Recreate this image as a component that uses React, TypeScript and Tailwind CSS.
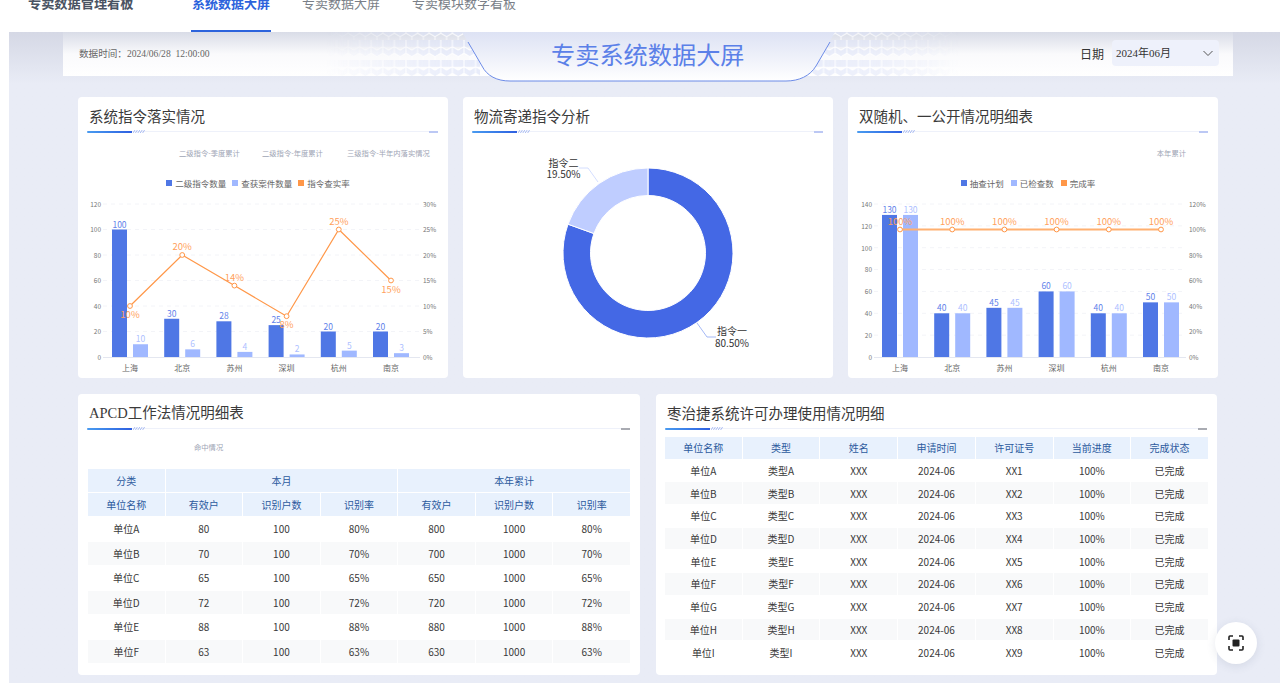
import type { ReactNode } from 'react';

const CJK = "'Noto Sans CJK SC', sans-serif";

function CardHeader({ title, serif, dash }: { title: string; serif?: boolean; dash?: boolean }) {
  return (
    <div className="relative h-[36px] shrink-0">
      <div className={`pl-[11px] pt-[9px] text-[14.5px] leading-[20px] text-[#3a3a3a] ${serif ? "font-['Liberation_Serif','Noto_Sans_CJK_SC',serif]" : ''}`}>
        {title}
      </div>
      <div className="absolute left-[9px] right-[10px] bottom-[1px] h-px bg-[#eef1fa]" />
      <div className="absolute left-[9px] bottom-0 h-[2px] w-[45px] rounded-l-full bg-gradient-to-r from-[#4a9bf0] to-[#2f5fe0]" />
      <svg className="absolute left-[55px] bottom-0" width="12" height="3" viewBox="0 0 12 3">
        {[0, 2.4, 4.8, 7.2, 9.6].map((x) => (
          <line key={x} x1={x} y1="3" x2={x + 2} y2="0" stroke="#8aa4ee" strokeWidth="0.7" />
        ))}
      </svg>
      <div className={`absolute right-[10px] bottom-0 h-[2px] w-[9px] ${dash ? 'bg-[#a9abb2]' : 'bg-[#bcc8f4]'}`} />
    </div>
  );
}

function Card({ children, className }: { children: ReactNode; className: string }) {
  return <div className={`flex h-[281px] flex-col rounded bg-white ${className}`}>{children}</div>;
}

function Legend({ items, className }: { items: { name: string; color: string }[]; className: string }) {
  return (
    <div className={`flex items-center justify-center text-[8.5px] leading-[12px] text-[#666] ${className}`}>
      {items.map((it) => (
        <div key={it.name} className="flex items-center gap-[3px]">
          <span className="h-[6px] w-[6px]" style={{ background: it.color }} />
          {it.name}
        </div>
      ))}
    </div>
  );
}

const cats = ['上海', '北京', '苏州', '深圳', '杭州', '南京'];

type BarChartProps = {
  vb: string;
  x0: number;
  x1: number;
  first: number;
  leftTicks: number[];
  leftMax: number;
  rightTicks: string[];
  rightMax: number;
  a: number[];
  b: number[];
  rate: number[];
  rateLabels: { t: string; dy: number }[];
  lineWidth: number;
  lineColor: string;
};

function BarChart(p: BarChartProps) {
  const top = 204;
  const bottom = 357;
  const h = bottom - top;
  const yL = (v: number) => bottom - (v / p.leftMax) * h;
  const yR = (v: number) => bottom - (v / p.rightMax) * h;
  const cx = (i: number) => p.first + i * 52.2;
  const stepGrid = p.leftTicks.length - 1;
  return (
    <svg className="mt-[6px] block" width="370" height="183" viewBox={p.vb} style={{ fontFamily: CJK }}>
      {p.leftTicks.map((t, i) => {
        const y = bottom - (i / stepGrid) * h;
        return (
          <g key={t}>
            {i > 0 && <line x1={p.x0} x2={p.x1} y1={y} y2={y} stroke="#f3f4f8" strokeDasharray="4 4" />}
            <text x={p.x0 - 2} y={y + 2.8} fontSize="6.5" fill="#777" textAnchor="end">{t}</text>
          </g>
        );
      })}
      {p.rightTicks.map((t, i) => (
        <text key={t} x={p.x1 + 3} y={bottom - (i / (p.rightTicks.length - 1)) * h + 2.8} fontSize="6.5" fill="#777">{t}</text>
      ))}
      <line x1={p.x0} x2={p.x1} y1={bottom + 0.5} y2={bottom + 0.5} stroke="#e4e7f0" />
      {cats.map((c, i) => (
        <g key={c}>
          <rect x={cx(i) - 18} y={yL(p.a[i])} width="15" height={bottom - yL(p.a[i])} fill="#4f77e5" />
          <rect x={cx(i) + 3} y={yL(p.b[i])} width="15" height={bottom - yL(p.b[i])} fill="#a0b8ff" />
          <text x={cx(i) - 10.5} y={yL(p.a[i]) - 2} fontSize="8.5" fill="#5f82ea" textAnchor="middle">{p.a[i]}</text>
          <text x={cx(i) + 10.5} y={yL(p.b[i]) - 2} fontSize="8.5" fill="#aebfff" textAnchor="middle">{p.b[i]}</text>
          <text x={cx(i)} y={371} fontSize="8" fill="#666" textAnchor="middle">{c}</text>
        </g>
      ))}
      <polyline
        points={p.rate.map((r, i) => `${cx(i)},${yR(r)}`).join(' ')}
        fill="none"
        stroke={p.lineColor}
        strokeWidth={p.lineWidth}
      />
      {p.rate.map((r, i) => (
        <g key={i}>
          <circle cx={cx(i)} cy={yR(r)} r="2.4" fill="#fff" stroke="#ff9748" strokeWidth="1" />
          <text x={cx(i)} y={yR(r) + p.rateLabels[i].dy} fontSize="9.5" fill="#ff9f5c" textAnchor="middle">{p.rateLabels[i].t}</text>
        </g>
      ))}
    </svg>
  );
}

function Donut() {
  const cx = 648;
  const cy = 253;
  const R = 85;
  const r = 57.5;
  const pt = (rad: number, deg: number) => {
    const a = (deg * Math.PI) / 180;
    return `${cx + rad * Math.sin(a)} ${cy - rad * Math.cos(a)}`;
  };
  const split = 289.8;
  const seg = (from: number, to: number) =>
    `M${pt(R, from)} A${R} ${R} 0 ${to - from > 180 ? 1 : 0} 1 ${pt(R, to)} L${pt(r, to)} A${r} ${r} 0 ${to - from > 180 ? 1 : 0} 0 ${pt(r, from)} Z`;
  return (
    <svg className="block" width="370" height="245" viewBox="463 133 370 245" style={{ fontFamily: CJK }}>
      <path d={seg(0, split)} fill="#4468e5" stroke="#fff" strokeWidth="1" />
      <path d={seg(split, 360)} fill="#bfcdff" stroke="#fff" strokeWidth="1" />
      <polyline points="598,182 588,168 579,168" fill="none" stroke="#c9d5ff" strokeWidth="0.8" />
      <polyline points="697,323 707,337 716,337" fill="none" stroke="#8ea6f2" strokeWidth="0.8" />
      <text x="563.5" y="167" fontSize="10" fill="#333" textAnchor="middle">指令二</text>
      <text x="563.5" y="178" fontSize="10" fill="#333" textAnchor="middle">19.50%</text>
      <text x="732" y="335" fontSize="10" fill="#333" textAnchor="middle">指令一</text>
      <text x="732" y="347" fontSize="10" fill="#333" textAnchor="middle">80.50%</text>
    </svg>
  );
}

const apcd = [
  ['单位A', '80', '100', '80%', '800', '1000', '80%'],
  ['单位B', '70', '100', '70%', '700', '1000', '70%'],
  ['单位C', '65', '100', '65%', '650', '1000', '65%'],
  ['单位D', '72', '100', '72%', '720', '1000', '72%'],
  ['单位E', '88', '100', '88%', '880', '1000', '88%'],
  ['单位F', '63', '100', '63%', '630', '1000', '63%'],
];

const th = 'bg-[#e8f1fd] p-0 text-center text-[10px] font-normal text-[#2c5a9e]';
const td = 'p-0 text-center text-[10px] text-[#3a3a3a]';

function ApcdTable() {
  return (
    <table className="mx-[9px] mt-[15px] w-[544px] table-fixed border-separate border-spacing-[1px]">
      <thead>
        <tr className="h-[23px]">
          <th className={th}>分类</th>
          <th className={th} colSpan={3}>本月</th>
          <th className={th} colSpan={3}>本年累计</th>
        </tr>
        <tr className="h-[23px]">
          {['单位名称', '有效户', '识别户数', '识别率', '有效户', '识别户数', '识别率'].map((t, i) => (
            <th key={i} className={th}>{t}</th>
          ))}
        </tr>
      </thead>
      <tbody>
        {apcd.map((row, i) => (
          <tr key={i} className="h-[23.5px]">
            {row.map((c, j) => (
              <td key={j} className={`${td} ${i % 2 ? 'bg-[#f8f9fa]' : ''}`}>{c}</td>
            ))}
          </tr>
        ))}
      </tbody>
    </table>
  );
}

function PermitTable() {
  const letters = ['A', 'B', 'C', 'D', 'E', 'F', 'G', 'H', 'I'];
  return (
    <table className="mx-[8px] mt-[6px] w-[545px] table-fixed border-separate border-spacing-[1px]">
      <thead>
        <tr className="h-[21.7px]">
          {['单位名称', '类型', '姓名', '申请时间', '许可证号', '当前进度', '完成状态'].map((t) => (
            <th key={t} className={th}>{t}</th>
          ))}
        </tr>
      </thead>
      <tbody>
        {letters.map((l, i) => (
          <tr key={l} className="h-[21.7px]">
            {[`单位${l}`, `类型${l}`, 'XXX', '2024-06', `XX${i + 1}`, '100%', '已完成'].map((c, j) => (
              <td key={j} className={`${td} ${i % 2 ? 'bg-[#f8f9fa]' : ''}`}>{c}</td>
            ))}
          </tr>
        ))}
      </tbody>
    </table>
  );
}

function Banner() {
  return (
    <div className="relative ml-[54px] flex h-[44px] w-[1170px] items-center justify-between bg-gradient-to-b from-[#d9dce7] via-[#fafafc] to-white pl-[16px] pr-[14px]">
      <svg className="absolute left-0 top-0 overflow-visible" width="1170" height="50" viewBox="63 32 1170 50">
        <defs>
          <pattern id="hex" width="11.6" height="20" patternUnits="userSpaceOnUse">
            <path
              d="M5.8 -3.3 L11.6 0 V6.7 L5.8 10 L0 6.7 V0 Z M0 6.7 V13.3 L5.8 16.7 L11.6 13.3 V6.7 M5.8 16.7 V23"
              fill="#dfe5f9"
              fillOpacity="0.7"
              stroke="#fff"
              strokeOpacity="0.9"
              strokeWidth="1.1"
            />
          </pattern>
          <linearGradient id="fadeA" x1="0" x2="1" y1="0" y2="0">
            <stop offset="0" stopColor="#fff" stopOpacity="0" />
            <stop offset="0.7" stopColor="#fff" stopOpacity="0.8" />
            <stop offset="1" stopColor="#fff" stopOpacity="1" />
          </linearGradient>
          <linearGradient id="fadeB" x1="0" x2="1" y1="0" y2="0">
            <stop offset="0" stopColor="#fff" stopOpacity="1" />
            <stop offset="0.5" stopColor="#fff" stopOpacity="0.7" />
            <stop offset="1" stopColor="#fff" stopOpacity="0" />
          </linearGradient>
          <mask id="maskA">
            <rect x="325" y="32" width="155" height="44" fill="url(#fadeA)" />
          </mask>
          <mask id="maskB">
            <rect x="795" y="32" width="165" height="44" fill="url(#fadeB)" />
          </mask>
          <linearGradient id="shape" x1="0" x2="0" y1="0" y2="1">
            <stop offset="0" stopColor="#dde2f4" />
            <stop offset="1" stopColor="#ffffff" />
          </linearGradient>
        </defs>
        <rect x="325" y="32" width="155" height="44" fill="url(#hex)" mask="url(#maskA)" />
        <rect x="795" y="32" width="165" height="44" fill="url(#hex)" mask="url(#maskB)" />
        <path d="M462 32 L482 66 C487 76 497 81 510 81 L786 81 C799 81 810 76 816 66 L835 32 Z" fill="url(#shape)" />
        <path d="M468 42 L482 66 C487 76 497 81 510 81 L786 81 C799 81 810 76 816 66 L830 42" fill="none" stroke="#6d8ce8" strokeWidth="1" />
      </svg>
      <div className="relative font-['Liberation_Serif','Noto_Sans_CJK_SC',serif] text-[9.6px] text-[#666]">数据时间：2024/06/28&nbsp;&nbsp;12:00:00</div>
      <div className="absolute left-[488px] top-[5px] text-[24.2px] leading-[34px] text-[#5b80e8]">专卖系统数据大屏</div>
      <div className="relative flex items-center gap-[8px]">
        <span className="text-[12px] text-[#333]">日期</span>
        <div className="mb-[2px] flex h-[26px] w-[107px] items-center justify-between rounded-sm bg-[#eef1fb] pl-[4px] pr-[5px] font-['Liberation_Serif','Noto_Sans_CJK_SC',serif] text-[11px] text-[#333]">
          2024年06月
          <svg width="12" height="12" viewBox="0 0 12 12" fill="none" stroke="#555" strokeWidth="1">
            <path d="M1.5 4 L6 8.5 L10.5 4" />
          </svg>
        </div>
      </div>
    </div>
  );
}

export default function App() {
  return (
    <div className="relative flex h-[683px] w-[1280px] flex-col overflow-hidden bg-white font-['Noto_Sans_CJK_SC',sans-serif]">
      <div className="flex h-[32px] shrink-0 items-start overflow-hidden bg-white pl-[28px] text-[13px] leading-[16px]">
        <div className="-mt-[5px] w-[163px] text-[13.2px] font-bold text-[#4a5362]">专卖数据管理看板</div>
        <div className="flex h-[32px] w-[80px] justify-center border-b-2 border-[#2c63dc] font-bold text-[#2c63dc]">
          <span className="-mt-[5px]">系统数据大屏</span>
        </div>
        <div className="-mt-[5px] ml-[31px] text-[#7a7f88]">专卖数据大屏</div>
        <div className="-mt-[5px] ml-[32px] text-[#7a7f88]">专卖模块数字看板</div>
      </div>

      <div className="ml-[9px] flex-1 bg-gradient-to-b from-[#d5d8e5] from-0% to-[#e9ecf6] to-[8%]">
        <Banner />

        <div className="ml-[69px] mt-[21px] flex gap-[15px]">
          <Card className="w-[370px]">
            <CardHeader title="系统指令落实情况" />
            <div className="ml-[101px] mt-[14px] flex text-[7.3px] leading-[12px] text-[#a0a5b5]">
              <span className="w-[83px]">二级指令-季度累计</span>
              <span className="w-[85px]">二级指令-年度累计</span>
              <span>三级指令-半年内落实情况</span>
            </div>
            <Legend
              className="mr-[10px] mt-[18px] gap-[6px]"
              items={[
                { name: '二级指令数量', color: '#4f77e5' },
                { name: '查获案件数量', color: '#a0b8ff' },
                { name: '指令查实率', color: '#ff9748' },
              ]}
            />
            <BarChart
              vb="78 195 370 183"
              x0={103}
              x1={420}
              first={130}
              leftTicks={[0, 20, 40, 60, 80, 100, 120]}
              leftMax={120}
              rightTicks={['0%', '5%', '10%', '15%', '20%', '25%', '30%']}
              rightMax={30}
              a={[100, 30, 28, 25, 20, 20]}
              b={[10, 6, 4, 2, 5, 3]}
              rate={[10, 20, 14, 8, 25, 15]}
              rateLabels={[
                { t: '10%', dy: 12 },
                { t: '20%', dy: -5 },
                { t: '14%', dy: -5 },
                { t: '8%', dy: 12 },
                { t: '25%', dy: -5 },
                { t: '15%', dy: 12 },
              ]}
              lineWidth={1.2}
              lineColor="#ff9748"
            />
          </Card>

          <Card className="w-[370px]">
            <CardHeader title="物流寄递指令分析" />
            <Donut />
          </Card>

          <Card className="w-[370px]">
            <CardHeader title="双随机、一公开情况明细表" />
            <div className="mr-[32px] mt-[14px] text-right text-[7.3px] leading-[12px] text-[#a0a5b5]">本年累计</div>
            <Legend
              className="mr-[10px] mt-[18px] gap-[7px]"
              items={[
                { name: '抽查计划', color: '#4f77e5' },
                { name: '已检查数', color: '#a0b8ff' },
                { name: '完成率', color: '#ff9748' },
              ]}
            />
            <BarChart
              vb="848 195 370 183"
              x0={874}
              x1={1186}
              first={900}
              leftTicks={[0, 20, 40, 60, 80, 100, 120, 140]}
              leftMax={140}
              rightTicks={['0%', '20%', '40%', '60%', '80%', '100%', '120%']}
              rightMax={120}
              a={[130, 40, 45, 60, 40, 50]}
              b={[130, 40, 45, 60, 40, 50]}
              rate={[100, 100, 100, 100, 100, 100]}
              rateLabels={cats.map(() => ({ t: '100%', dy: -5 }))}
              lineWidth={2}
              lineColor="#ffb070"
            />
          </Card>
        </div>

        <div className="ml-[69px] mt-[16px] flex gap-[16px]">
          <Card className="w-[562px]">
            <CardHeader title="APCD工作法情况明细表" serif dash />
            <div className="ml-[116px] mt-[11px] text-[7.3px] leading-[12px] text-[#a0a5b5]">命中情况</div>
            <ApcdTable />
          </Card>
          <Card className="w-[561px]">
            <CardHeader title="枣治捷系统许可办理使用情况明细" dash />
            <PermitTable />
          </Card>
        </div>
      </div>

      <button className="absolute left-[1215px] top-[622px] flex h-[42px] w-[42px] items-center justify-center rounded-full bg-white shadow-[0_2px_10px_rgba(60,70,110,0.12)]">
        <svg width="16" height="16" viewBox="0 0 16 16" fill="none" stroke="#222" strokeWidth="1.6">
          <path d="M1 5 V2 A1 1 0 0 1 2 1 H5 M11 1 H14 A1 1 0 0 1 15 2 V5 M15 11 V14 A1 1 0 0 1 14 15 H11 M5 15 H2 A1 1 0 0 1 1 14 V11" />
          <rect x="4.5" y="4.5" width="7" height="7" rx="1" fill="#222" stroke="none" />
        </svg>
      </button>
    </div>
  );
}
